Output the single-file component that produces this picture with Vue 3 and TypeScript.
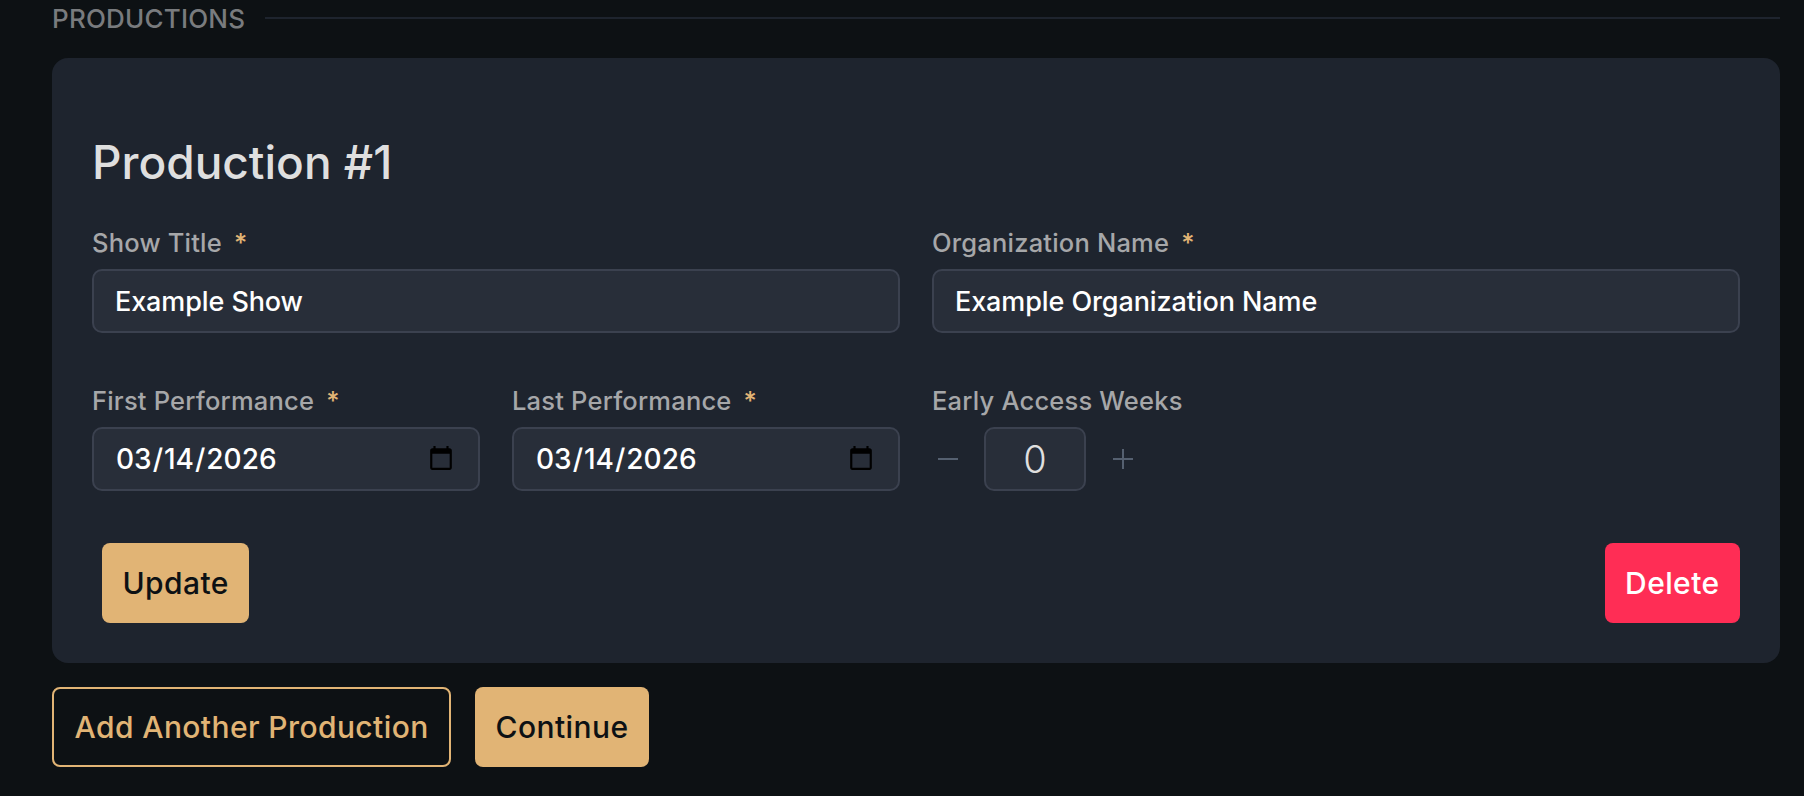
<script setup lang="ts">
import { ref } from 'vue'

const showTitle = ref('Example Show')
const orgName = ref('Example Organization Name')
const firstDate = ref('2026-03-14')
const lastDate = ref('2026-03-14')
const weeks = ref(0)
</script>

<template>
  <main class="page">
    <div class="section-head">
      <span class="section-title">PRODUCTIONS</span>
      <span class="section-line"></span>
    </div>

    <section class="card">
      <h2 class="card-title">Production #1</h2>

      <div class="grid">
        <div class="field">
          <label class="label">Show Title<span class="req">*</span></label>
          <input v-model="showTitle" class="input" type="text" />
        </div>
        <div class="field">
          <label class="label">Organization Name<span class="req">*</span></label>
          <input v-model="orgName" class="input" type="text" />
        </div>

        <div class="dates">
          <div class="field">
            <label class="label">First Performance<span class="req">*</span></label>
            <input v-model="firstDate" class="input date" type="date" />
          </div>
          <div class="field">
            <label class="label">Last Performance<span class="req">*</span></label>
            <input v-model="lastDate" class="input date" type="date" />
          </div>
        </div>
        <div class="field">
          <label class="label">Early Access Weeks</label>
          <div class="stepper">
            <button class="step" type="button" @click="weeks = Math.max(0, weeks - 1)">
              <svg width="20" height="20" viewBox="0 0 20 20"><path d="M0 10h20" stroke="currentColor" stroke-width="2" /></svg>
            </button>
            <div class="count">{{ weeks }}</div>
            <button class="step" type="button" @click="weeks++">
              <svg width="20" height="20" viewBox="0 0 20 20"><path d="M0 10h20M10 0v20" stroke="currentColor" stroke-width="2" /></svg>
            </button>
          </div>
        </div>
      </div>

      <div class="card-actions">
        <button class="btn primary" type="button">Update</button>
        <button class="btn danger" type="button">Delete</button>
      </div>
    </section>

    <div class="page-actions">
      <button class="btn outline" type="button">Add Another Production</button>
      <button class="btn primary" type="button">Continue</button>
    </div>
  </main>
</template>

<style>
html,
body {
  background: #0d1114;
}
</style>

<style scoped>
.page {
  width: 1728px;
  height: 796px;
  margin-left: 52px;
  font-family: Inter, "Liberation Sans", sans-serif;
  overflow: hidden;
}
.section-head {
  display: flex;
  align-items: center;
  gap: 20px;
  height: 36px;
  margin-bottom: 22px;
}
.section-title {
  font-size: 26px;
  font-weight: 500;
  letter-spacing: 0.2px;
  color: #797b7e;
}
.section-line {
  flex: 1;
  height: 2px;
  background: #1e242e;
}
.card {
  background: #1e242e;
  border-radius: 16px;
  padding: 74px 40px 40px;
}
.card-title {
  margin: 0 0 37px;
  font-size: 46px;
  line-height: 60px;
  font-weight: 500;
  color: #dfdfdf;
}
.grid {
  display: grid;
  grid-template-columns: 1fr 1fr;
  column-gap: 32px;
  row-gap: 54px;
}
.dates {
  display: grid;
  grid-template-columns: 1fr 1fr;
  gap: 32px;
}
.field {
  min-width: 0;
}
.label {
  display: block;
  height: 28px;
  margin-bottom: 12px;
  font-size: 25.5px;
  line-height: 28px;
  font-weight: 500;
  letter-spacing: 0.2px;
  color: #a6a7a9;
}
.req {
  margin-left: 12px;
  color: #e1b475;
}
.input {
  display: block;
  box-sizing: border-box;
  width: 100%;
  height: 64px;
  padding: 0 21px;
  font: 500 27px Inter, "Liberation Sans", sans-serif;
  letter-spacing: -0.1px;
  color: #fff;
  background: #282e39;
  border: 2px solid #3b414f;
  border-radius: 10px;
  outline: none;
}
.date {
  font-size: 28px;
  letter-spacing: 0;
}
.stepper {
  display: flex;
  align-items: center;
  gap: 21px;
  height: 64px;
}
.step {
  display: flex;
  align-items: center;
  justify-content: center;
  width: 31px;
  height: 64px;
  padding: 0;
  color: #556070;
  background: none;
  border: 0;
}
.count {
  display: flex;
  align-items: center;
  justify-content: center;
  box-sizing: border-box;
  width: 102px;
  height: 64px;
  font-size: 38px;
  font-weight: 300;
  color: #dfdfdf;
  background: #282e39;
  border: 2px solid #3b414f;
  border-radius: 10px;
}
.card-actions {
  display: flex;
  justify-content: space-between;
  margin-top: 52px;
  padding-left: 10px;
}
.btn {
  height: 80px;
  padding: 0 20.5px;
  font: 500 30px Inter, "Liberation Sans", sans-serif;
  letter-spacing: 0.4px;
  border-radius: 8px;
  border: 0;
  box-sizing: border-box;
}
.primary {
  color: #0d1114;
  background: #e1b475;
}
.danger {
  color: #fff;
  background: #ff2d55;
}
.outline {
  color: #e1b475;
  background: transparent;
  border: 2px solid #e1b475;
}
.page-actions {
  display: flex;
  gap: 24px;
  margin-top: 24px;
}
</style>
